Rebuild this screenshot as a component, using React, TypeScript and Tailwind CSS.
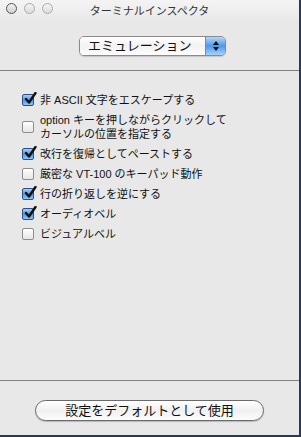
import React from "react";

const FONT = { fontFamily: '"Liberation Sans", "Noto Sans CJK JP", sans-serif' };

function Check({ checked }: { checked: boolean }) {
  if (checked) {
    return (
      <div className="relative w-[12px] h-[12px] shrink-0 rounded-[2px] border border-[#2b4f86] bg-gradient-to-b from-[#a9cdf4] via-[#4f97e2] to-[#8cc4f6]">
        <svg className="absolute left-[1px] top-[-3px]" width="13" height="13" viewBox="0 0 13 13">
          <path d="M2 7 L5 10.5 L11.5 1" fill="none" stroke="#111" strokeWidth="2.4" strokeLinecap="round" strokeLinejoin="round" />
        </svg>
      </div>
    );
  }
  return (
    <div className="w-[12px] h-[12px] shrink-0 rounded-[2px] border border-[#8e8e8e] bg-gradient-to-b from-[#ffffff] to-[#e6e6e6]" />
  );
}

function Row({ checked, children }: { checked: boolean; children: React.ReactNode }) {
  return (
    <div className="flex items-center gap-[6px]">
      <Check checked={checked} />
      <div className="text-[11px] leading-[14px] text-[#111]">{children}</div>
    </div>
  );
}

export default function App() {
  return (
    <div style={FONT} className="w-[301px] h-[437px] bg-[#e8e8e8] border-r-2 border-b-2 border-[#263a5e] flex flex-col overflow-hidden">
      <div className="h-[22px] shrink-0 flex items-center relative bg-gradient-to-b from-[#f4f4f4] to-[#e8e8e8]">
        <div className="flex gap-[7px] pl-[6px] -mt-[5px]">
          <div className="w-[11px] h-[11px] rounded-full border border-[#555] bg-gradient-to-b from-[#f0f0f0] to-[#d0d0d0]" />
          <div className="w-[11px] h-[11px] rounded-full border border-[#aaa] bg-gradient-to-b from-[#f4f4f4] to-[#dcdcdc]" />
          <div className="w-[11px] h-[11px] rounded-full border border-[#aaa] bg-gradient-to-b from-[#f4f4f4] to-[#dcdcdc]" />
        </div>
        <div className="absolute inset-0 flex items-center justify-center text-[11px] text-[#333]">ターミナルインスペクタ</div>
      </div>
      <div className="h-[48px] shrink-0 flex justify-center pt-[14px] pl-[6px]">
        <div className="flex h-[20px] w-[147px] rounded-[5px] border border-[#8a8a8a] overflow-hidden shadow-[0_1px_1px_rgba(0,0,0,0.15)]">
          <div className="flex-1 flex items-center pl-[8px] text-[13px] text-[#111] bg-gradient-to-b from-[#ffffff] via-[#f2f2f2] to-[#fdfdfd]">エミュレーション</div>
          <div className="w-[20px] flex flex-col items-center justify-center gap-[2px] border-l border-[#6a8cc0] bg-gradient-to-b from-[#b6d6f8] via-[#4d97e8] to-[#a6d2fa]">
            <svg width="6" height="4" viewBox="0 0 6 4"><path d="M0 4 L3 0 L6 4 Z" fill="#111" /></svg>
            <svg width="6" height="4" viewBox="0 0 6 4"><path d="M0 0 L3 4 L6 0 Z" fill="#111" /></svg>
          </div>
        </div>
      </div>
      <div className="h-px shrink-0 bg-[#808080]" />
      <div className="flex-1 flex flex-col gap-[6px] pl-[22px] pt-[22px]">
        <Row checked>非 ASCII 文字をエスケープする</Row>
        <Row checked={false}>option キーを押しながらクリックして<br />カーソルの位置を指定する</Row>
        <Row checked>改行を復帰としてペーストする</Row>
        <Row checked={false}>厳密な VT-100 のキーパッド動作</Row>
        <Row checked>行の折り返しを逆にする</Row>
        <Row checked>オーディオベル</Row>
        <Row checked={false}>ビジュアルベル</Row>
      </div>
      <div className="h-px shrink-0 bg-[#808080]" />
      <div className="h-[54px] shrink-0 flex justify-center pt-[19px]">
        <div className="flex items-center justify-center w-[229px] h-[21px] rounded-full border border-[#6a6a6a] bg-gradient-to-b from-[#ffffff] via-[#f0f0f0] to-[#fcfcfc] text-[13px] text-[#111] shadow-[0_1px_1px_rgba(0,0,0,0.2)]">設定をデフォルトとして使用</div>
      </div>
    </div>
  );
}
